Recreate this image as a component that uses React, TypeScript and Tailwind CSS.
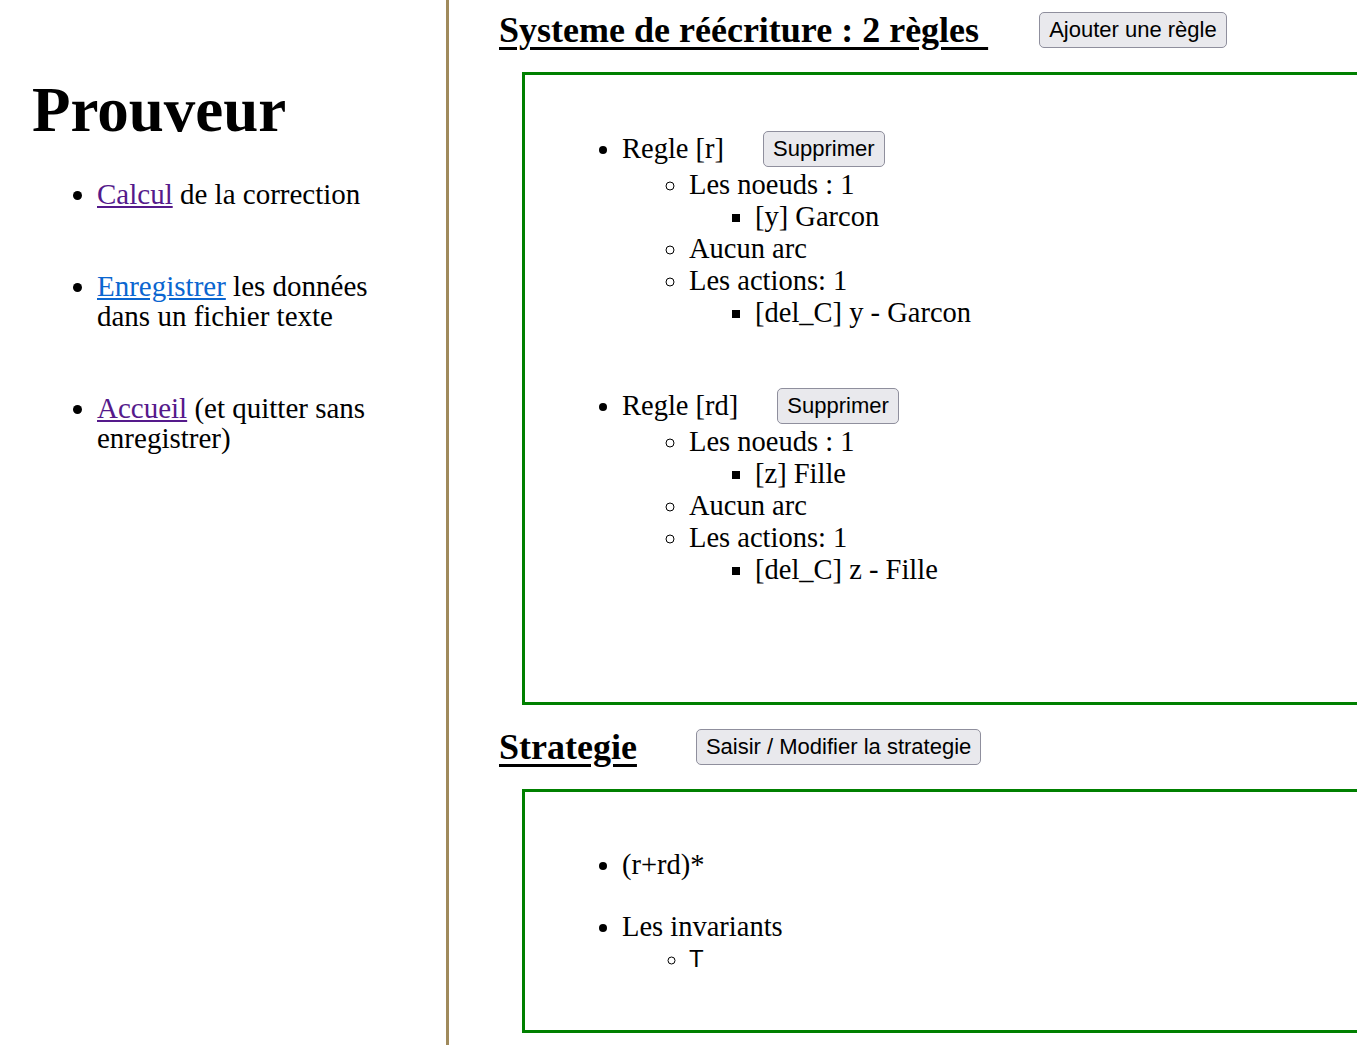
const serif = "font-['Liberation_Serif','Times_New_Roman',serif]";
const sans = "font-['Liberation_Sans',Arial,sans-serif]";

type Rule = {
  name: string;
  nodes: string[];
  actions: string[];
};

const RULES: Rule[] = [
  { name: "r", nodes: ["[y] Garcon"], actions: ["[del_C] y - Garcon"] },
  { name: "rd", nodes: ["[z] Fille"], actions: ["[del_C] z - Fille"] },
];

function Btn({ children, className = "" }: { children: React.ReactNode; className?: string }) {
  return (
    <button
      className={`${sans} inline-flex h-[36px] items-center rounded-[5px] border border-[#8f8f9d] bg-[#e9e9ed] px-[9px] text-[22px] leading-none text-black align-middle ${className}`}
    >
      {children}
    </button>
  );
}

function Sidebar() {
  return (
    <aside className="w-[449px] shrink-0 border-r-[3px] border-[#a08a5c]">
      <h1 className="ml-[32px] mt-[79px] text-[63px] font-bold leading-[63px]">Prouveur</h1>
      <ul className="mt-[37px] flex list-disc flex-col gap-[62px] pl-[97px] pr-[30px] text-[29px] leading-[30px]">
        <li>
          <a href="#" className="text-[#551a8b] underline">Calcul</a> de la correction
        </li>
        <li>
          <a href="#" className="text-[#0b66d0] underline">Enregistrer</a> les données
          <br />
          dans un fichier texte
        </li>
        <li>
          <a href="#" className="text-[#551a8b] underline">Accueil</a> (et quitter sans
          <br />
          enregistrer)
        </li>
      </ul>
    </aside>
  );
}

function RuleItem({ rule }: { rule: Rule }) {
  return (
    <li>
      <div className="flex h-[36px] items-center">
        <span>Regle [{rule.name}]</span>
        <Btn className="ml-[39px]">Supprimer</Btn>
      </div>
      <ul className="mt-[2px] list-[circle] pl-[67px]">
        <li>
          Les noeuds : {rule.nodes.length}
          <ul className="list-[square] pl-[66px]">
            {rule.nodes.map((n) => (
              <li key={n}>{n}</li>
            ))}
          </ul>
        </li>
        <li>Aucun arc</li>
        <li>
          Les actions: {rule.actions.length}
          <ul className="list-[square] pl-[66px]">
            {rule.actions.map((a) => (
              <li key={a}>{a}</li>
            ))}
          </ul>
        </li>
      </ul>
    </li>
  );
}

export default function App() {
  return (
    <div className={`${serif} flex min-h-[1045px] w-full overflow-hidden bg-white text-black`}>
      <Sidebar />
      <main className="min-w-0 flex-1">
        <div className="mt-[12px] flex h-[35px] items-center pl-[50px]">
          <h2 className="text-[36px] font-bold leading-none underline decoration-[3px] underline-offset-[5px]">
            Systeme de réécriture : 2 règles&nbsp;
          </h2>
          <Btn className="ml-[51px]">Ajouter une règle</Btn>
        </div>

        <section className="ml-[73px] mt-[25px] w-[900px] border-[3px] border-[#008000] pb-[116px] pt-[56px]">
          <ul className="flex list-disc flex-col gap-[59px] pl-[97px] text-[28.5px] leading-[32px]">
            {RULES.map((r) => (
              <RuleItem key={r.name} rule={r} />
            ))}
          </ul>
        </section>

        <div className="mt-[24px] flex h-[35px] items-center pl-[50px]">
          <h2 className="text-[36px] font-bold leading-none underline decoration-[3px] underline-offset-[5px]">
            Strategie
          </h2>
          <Btn className="ml-[59px]">Saisir / Modifier la strategie</Btn>
        </div>

        <section className="ml-[73px] mt-[25px] w-[900px] border-[3px] border-[#008000] pb-[55px] pt-[57px]">
          <ul className="flex list-disc flex-col gap-[30px] pl-[97px] text-[28.5px] leading-[32px]">
            <li>(r+rd)*</li>
            <li>
              Les invariants
              <ul className="list-[circle] pl-[67px]">
                <li className={`${sans} text-[24px]`}>T</li>
              </ul>
            </li>
          </ul>
        </section>
      </main>
    </div>
  );
}
